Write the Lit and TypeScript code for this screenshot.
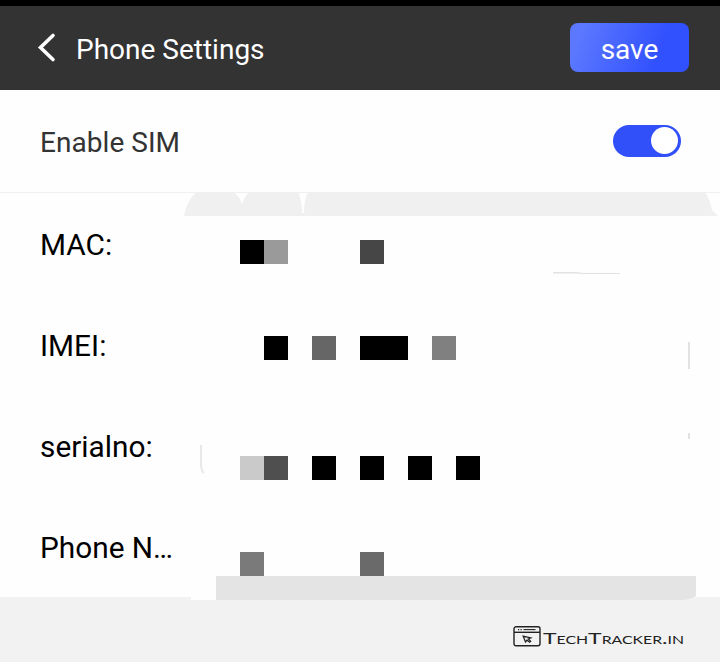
import { LitElement, html, svg, css } from "lit";
import { customElement } from "lit/decorators.js";

// Mosaic cells covering the values: x, y, width, colour
const CELLS: [number, number, number, string][] = [
  [240, 240, 24, "#000"], [264, 240, 24, "#9a9a9a"], [360, 240, 24, "#464646"],
  [264, 336, 24, "#000"], [312, 336, 24, "#666"], [360, 336, 48, "#000"], [432, 336, 24, "#808080"],
  [240, 456, 24, "#cacaca"], [264, 456, 24, "#4f4f4f"], [312, 456, 24, "#000"],
  [360, 456, 24, "#000"], [408, 456, 24, "#000"], [456, 456, 24, "#000"],
  [240, 552, 24, "#7a7a7a"], [360, 552, 24, "#6a6a6a"],
];

@customElement("app-root")
export class AppRoot extends LitElement {
  static styles = css`
    :host {
      display: flex;
      flex-direction: column;
      position: relative;
      height: 662px;
      overflow: hidden;
      background: #fefefe;
      font-family: Roboto, "Liberation Sans", sans-serif;
      font-size: 28px;
    }
    .status { height: 6px; background: #000; flex: none; }
    .header {
      box-sizing: border-box;
      height: 84px;
      flex: none;
      display: flex;
      align-items: center;
      padding: 0 31px 0 36px;
      background: #333;
      color: #fff;
    }
    .back { display: block; width: 20px; height: 32px; }
    .title { flex: 1; padding: 3px 0 0 20px; line-height: 34px; }
    .save {
      box-sizing: border-box;
      width: 119px;
      height: 49px;
      margin-bottom: 1px;
      padding: 4px 0 0;
      border: 0;
      border-radius: 8px;
      background: linear-gradient(110deg, #5b78ff 10%, #3150fe 75%);
      color: #fff;
      font: inherit;
    }
    .sim {
      box-sizing: border-box;
      height: 103px;
      flex: none;
      display: flex;
      align-items: center;
      justify-content: space-between;
      padding: 0 39px 0 40px;
      border-bottom: 1px solid #f0f0f0;
      color: #333;
    }
    .sim-label { padding-top: 3px; letter-spacing: 0.05px; }
    .toggle {
      box-sizing: border-box;
      width: 68px;
      height: 32px;
      border-radius: 16px;
      padding: 2px 3px;
      display: flex;
      justify-content: flex-end;
      background: #3150fa;
    }
    .knob { width: 27px; height: 27px; border-radius: 50%; background: #fff; }
    .list { height: 404px; flex: none; color: #000; font-size: 29.8px; }
    .row { height: 101px; display: flex; align-items: center; padding-left: 40px; }
    .label { padding-top: 2px; }
    .footer {
      flex: 1;
      display: flex;
      justify-content: flex-end;
      padding: 29px 35px 0 0;
      background: #f2f2f2;
    }
    .brand-icon { width: 28px; height: 21px; flex: none; }
    .brand { width: 144px; height: 24px; flex: none; }
    .brand text { font-family: Lato, sans-serif; font-variant: small-caps; font-size: 16px; fill: #222; }
    .overlay { position: absolute; inset: 0; width: 720px; height: 662px; pointer-events: none; }
  `;

  render() {
    return html`
      <div class="status"></div>
      <header class="header">
        <svg class="back" viewBox="0 0 20 32" fill="none" stroke="#fff" stroke-width="3.6" stroke-linecap="round" stroke-linejoin="miter">
          <path d="M17 3.5 4.5 15.500 17 27.500" />
        </svg>
        <div class="title">Phone Settings</div>
        <button class="save">save</button>
      </header>
      <div class="sim">
        <span class="sim-label">Enable SIM</span>
        <div class="toggle"><div class="knob"></div></div>
      </div>
      <main class="list">
        ${["MAC:", "IMEI:", "serialno:", "Phone N…"].map(
          (label) => html`<div class="row"><span class="label">${label}</span></div>`
        )}
      </main>
      <footer class="footer">
        <svg class="brand-icon" viewBox="0 0 28 21" fill="none" stroke="#222" stroke-width="1.4">
          <rect x="1" y=".8" width="26" height="19" rx="2" />
          <path d="M1 6.300h26" />
          <path d="M10.500 3.600h12" stroke-width="1.100" />
          <path d="M5 3.600h1.200M7.500 3.600h1.200" stroke-width="1.100" />
          <path d="M10.200 10.200 12.500 16 14 14.200 16.700 16.300 17.700 15.200 15.300 13 17.800 12Z" stroke-width="1.200" />
        </svg>
        <svg class="brand"><text x="2" y="17.500" textLength="141" lengthAdjust="spacingAndGlyphs">TechTracker.in</text></svg>
      </footer>
      <svg class="overlay" viewBox="0 0 720 662">
        <path fill="#f0f0f0" d="M184 216C186 206 190 197 197 192H233Q239 195 242 204Q245 196 249 192H298Q302 200 302 213H304Q304 201 308 192H705Q711 202 712 210L718 216Z" />
        <path fill="#e2e2e2" d="M553 272h23l7 1h37v1h-37l-7-.500h-23z" />
        <path fill="#e2e2e2" d="M688 342h2v27h-2zM688 433h2v6h-2z" />
        <path d="M201 445V464Q201 471 204 473" fill="none" stroke="#e8e8e8" stroke-width="2" />
        <path fill="#fefefe" d="M191 596h25v4h-25z" />
        <path fill="#e4e4e4" d="M216 576h480v20q-5 3-13 4H216z" />
        ${CELLS.map(([x, y, w, c]) => svg`<rect x=${x} y=${y} width=${w} height="24" fill=${c} />`)}
      </svg>
    `;
  }
}
